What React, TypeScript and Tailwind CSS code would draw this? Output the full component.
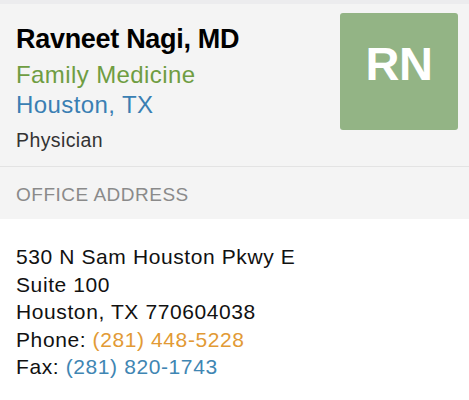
const DoctorCard = () => {
  return (
    <div className="w-[469px] h-[400px] bg-white font-['Helvetica_Neue','Liberation_Sans',Arial,sans-serif] overflow-hidden">
      {/* Header */}
      <div className="bg-[#f4f4f4] border-t-[4px] border-[#ececee]">
        <div className="h-[163px] flex justify-between items-start pl-4 pr-[11px] pt-[9px] border-b border-[#e3e3e3]">
          <div className="flex flex-col">
            <h1 className="text-[27px] leading-[30px] font-bold tracking-[-0.3px] text-black mt-[11px]">
              Ravneet Nagi, MD
            </h1>
            <p className="text-[24px] leading-[29px] tracking-[0.4px] text-[#6f9d42] mt-[6px]">Family Medicine</p>
            <p className="text-[24px] leading-[29px] tracking-[0.4px] text-[#3a7fb3] mt-[1px]">Houston, TX</p>
            <p className="text-[19.5px] leading-[24px] tracking-[0.4px] text-[#333] mt-[9px]">Physician</p>
          </div>
          <div className="w-[118px] h-[117px] rounded-[3px] bg-[#93b485] flex justify-center pt-[26px]">
            <span className="text-[47px] leading-[50px] font-bold text-white tracking-[-0.5px]">RN</span>
          </div>
        </div>
        <div className="pl-4 pt-[16px] pb-[13px]">
          <h2 className="text-[19px] leading-[23px] text-[#8a8a8a] tracking-[0.5px]">OFFICE ADDRESS</h2>
        </div>
      </div>

      {/* Address */}
      <div className="pl-4 pt-[24px] text-[21px] leading-[27.5px] tracking-[0.6px] text-[#111]">
        <p>530 N Sam Houston Pkwy E</p>
        <p>Suite 100</p>
        <p>Houston, TX 770604038</p>
        <p>
          Phone: <span className="text-[#e29a35]">(281) 448-5228</span>
        </p>
        <p>
          Fax: <span className="text-[#3f86b3]">(281) 820-1743</span>
        </p>
      </div>
    </div>
  );
};

export default function App() {
  return <DoctorCard />;
}
